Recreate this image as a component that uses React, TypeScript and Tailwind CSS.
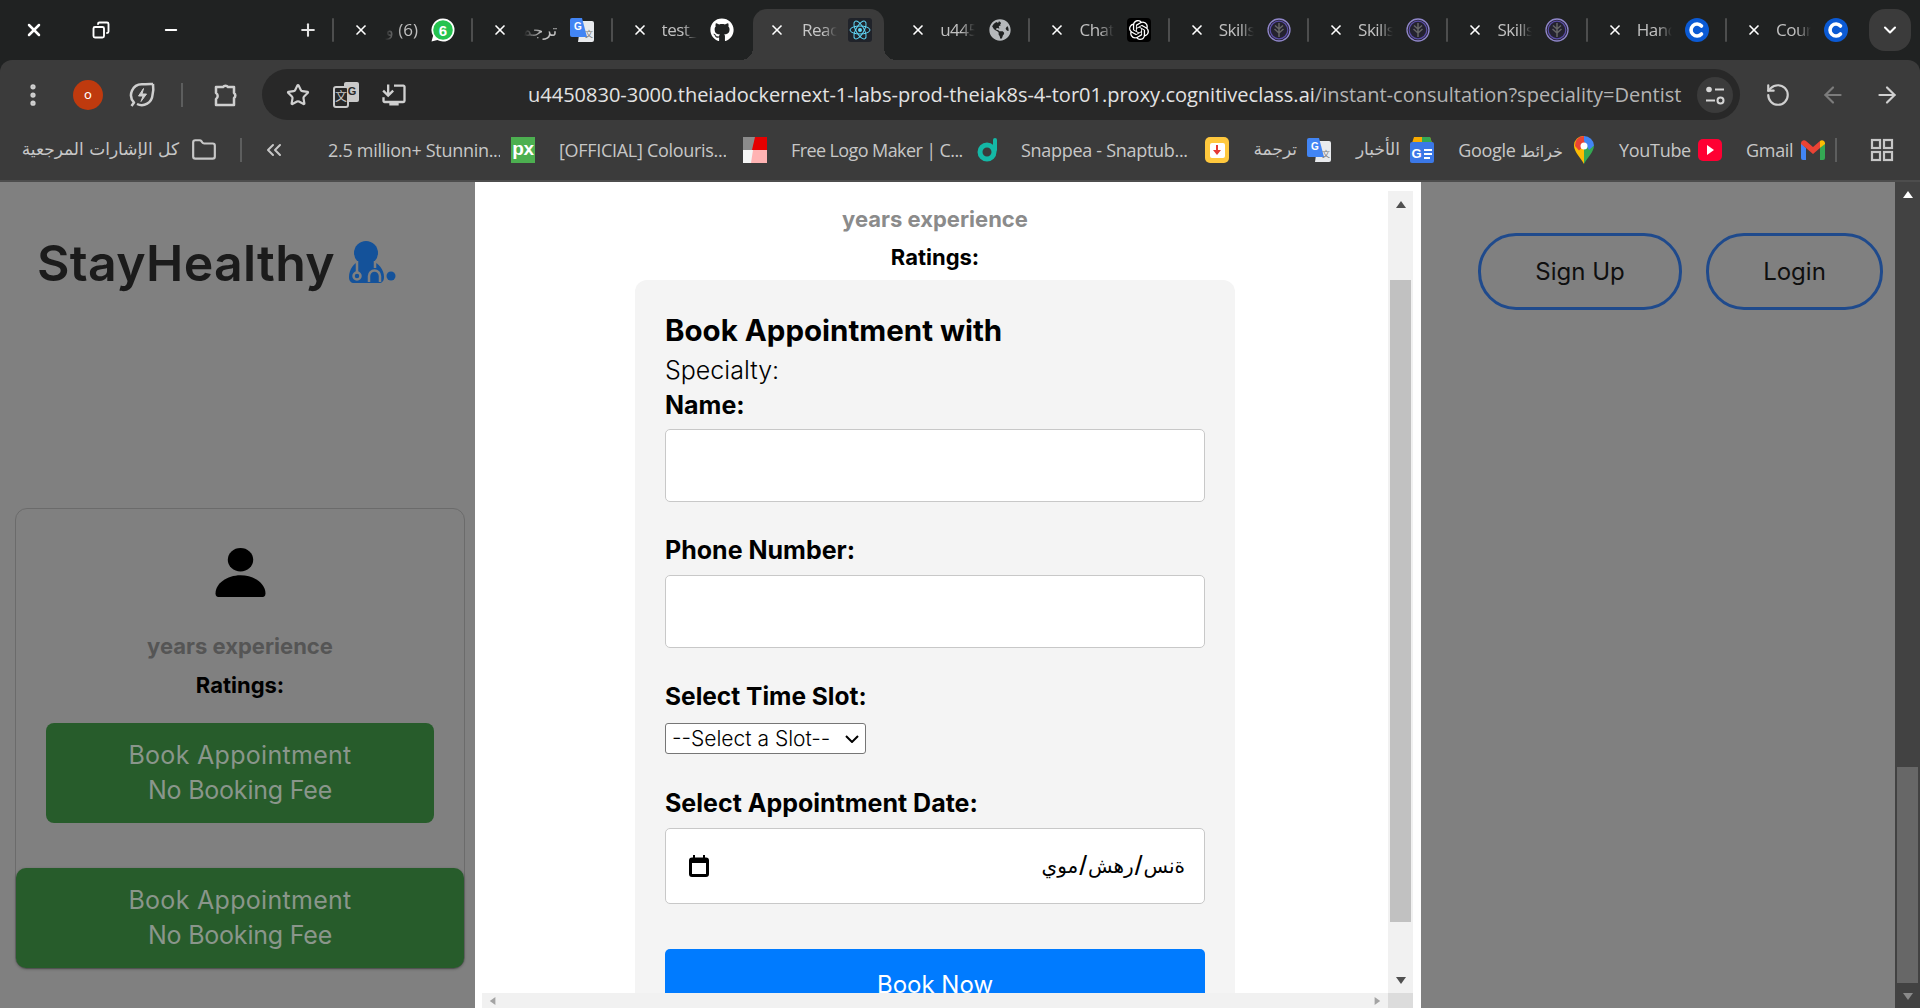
import { ArrowLeft, ArrowRight, ChevronDown, ChevronsLeft, Copy, EllipsisVertical, Folder, Minus, Plus, RotateCcw, Star, X } from "lucide-react";
import { FaGithub, FaGlobeAmericas } from "react-icons/fa";
import { MdInstallDesktop } from "react-icons/md";
import { SiOpenai } from "react-icons/si";
import type { ReactNode } from "react";

function Translate() {
  return (
    <svg viewBox="0 0 24 24" className="w-6 h-6">
      <path d="M11 3h11a2 2 0 0 1 2 2v17a2 2 0 0 1-2 2H8z" fill="#e8eaed" />
      <path d="M2 0h10l5 19H2a2 2 0 0 1-2-2V2a2 2 0 0 1 2-2z" fill="#4285f4" />
      <text x="4" y="12" fontSize="10" fontWeight="700" fill="#fff" fontFamily="Liberation Sans, sans-serif">G</text>
      <text x="15" y="19" fontSize="8" fill="#777" fontFamily="Noto Sans CJK SC, sans-serif">文</text>
    </svg>
  );
}

function Whatsapp() {
  return (
    <svg viewBox="0 0 24 24" className="w-6 h-6">
      <path d="M12 0.5a11.5 11.5 0 0 1 0 23c-2 0-4-.5-5.600-1.400L.5 23.500l1.600-5.700A11.500 11.500 0 0 1 12 .5z" fill="#fff" />
      <circle cx="12" cy="12" r="9.800" fill="#25c34f" />
      <text x="12" y="17.500" textAnchor="middle" fontSize="15" fontWeight="700" fill="#fff" fontFamily="Liberation Sans, sans-serif">6</text>
    </svg>
  );
}

function ReactLogo() {
  return (
    <span className="w-6 h-6 rounded-[3px] bg-[#20232a] flex items-center justify-center">
      <svg viewBox="-12 -12 24 24" className="w-6 h-6" fill="none" stroke="#61dafb" strokeWidth="1">
        <circle r="2" fill="#61dafb" stroke="none" />
        <ellipse rx="10" ry="4" />
        <ellipse rx="10" ry="4" transform="rotate(60)" />
        <ellipse rx="10" ry="4" transform="rotate(120)" />
      </svg>
    </span>
  );
}

function Skills() {
  return (
    <svg viewBox="0 0 24 24" className="w-6 h-6">
      <circle cx="12" cy="12" r="11" fill="#24222f" stroke="#8f86c9" strokeWidth="1.300" />
      <circle cx="12" cy="12" r="8.800" fill="none" stroke="#5b4ea8" strokeWidth="1.200" />
      <path d="M12 5v14M12 11 8 7.500M12 11l4-3.500M12 15l-4.500-4M12 15l4.500-4" stroke="#666" strokeWidth="1.500" fill="none" />
    </svg>
  );
}

function Cognitive() {
  return (
    <span className="w-6 h-6 rounded-full bg-[#0b5ad4] flex items-center justify-center">
      <svg viewBox="0 0 24 24" className="w-6 h-6" fill="none" stroke="#fff" strokeWidth="3.600" strokeLinecap="round">
        <path d="M16.500 8a6 6 0 1 0 0 8" />
      </svg>
    </span>
  );
}

function ChatIcon() {
  return (
    <span className="w-6 h-6 rounded-[4px] bg-black flex items-center justify-center">
      <SiOpenai className="w-5 h-5 text-white" />
    </span>
  );
}

type TabInfo = { title: string; icon: ReactNode; active?: boolean; hideSep?: boolean; rtl?: boolean };

const tabs: TabInfo[] = [
  { title: "(6) و", icon: <Whatsapp />, rtl: true },
  { title: "ترجمة", icon: <Translate />, rtl: true },
  { title: "test_", icon: <FaGithub className="w-6 h-6 text-white" /> },
  { title: "React", icon: <ReactLogo />, active: true, hideSep: true },
  { title: "u4450", icon: <FaGlobeAmericas className="w-[22px] h-[22px] text-[#b5b8bb]" />, hideSep: true },
  { title: "ChatGPT", icon: <ChatIcon /> },
  { title: "Skills", icon: <Skills /> },
  { title: "Skills", icon: <Skills /> },
  { title: "Skills", icon: <Skills /> },
  { title: "Hands", icon: <Cognitive /> },
  { title: "Course", icon: <Cognitive /> },
];

function Tab({ tab }: { tab: TabInfo }) {
  if (tab.active) {
    return (
      <div className="relative ml-[3px] mr-[5px] w-[131.300px] h-[51px] self-end flex items-center bg-[#3b3b3b] rounded-t-[14px] pb-[9px]">
        <span className="absolute -left-3 bottom-0 w-3 h-3 bg-[radial-gradient(circle_at_0_0,transparent_12px,#3b3b3b_12px)]" />
        <span className="absolute -right-3 bottom-0 w-3 h-3 bg-[radial-gradient(circle_at_100%_0,transparent_12px,#3b3b3b_12px)]" />
        <X className="ml-[16px] w-4 h-4 text-white shrink-0" strokeWidth={2.5} />
        <span className="ml-[17px] w-[35px] overflow-hidden whitespace-nowrap text-[17px] tracking-[-0.5px] text-[#c7c7c7] [mask-image:linear-gradient(to_right,black_60%,transparent)]">{tab.title}</span>
        <span className="ml-[11px] shrink-0">{tab.icon}</span>
      </div>
    );
  }
  return (
    <div className="w-[139.300px] h-full flex items-center shrink-0">
      <span className={tab.hideSep ? "w-[2px] h-6" : "w-[2px] h-6 rounded-full bg-[#4d4e4e]"} />
      <X className="ml-[19px] w-4 h-4 text-white shrink-0" strokeWidth={2.5} />
      {tab.rtl ? (
        <span dir="rtl" className="ml-[14px] w-[38px] overflow-hidden whitespace-nowrap text-[17px] text-[#c0c0c0] pr-[3px] [mask-image:linear-gradient(to_right,transparent_5%,black_50%)]">
          {tab.title}
        </span>
      ) : (
        <span className="ml-[14px] w-[38px] overflow-hidden whitespace-nowrap text-[17px] tracking-[-0.5px] text-[#c0c0c0] [mask-image:linear-gradient(to_right,black_55%,transparent_92%)]">
          {tab.title}
        </span>
      )}
      <span className="ml-[10px] w-6 h-6 flex items-center justify-center shrink-0">{tab.icon}</span>
    </div>
  );
}

function TabStrip() {
  return (
    <div className="h-[60px] bg-[#202222] flex items-center shrink-0">
      <div className="w-[332px] h-full flex items-center shrink-0">
        <X className="ml-[24px] w-5 h-5 text-white" strokeWidth={3} />
        <Copy className="ml-[48px] w-[18px] h-[18px] text-white -scale-x-100" strokeWidth={2.5} />
        <Minus className="ml-[52px] w-[18px] h-[18px] text-white" strokeWidth={2.5} />
        <Plus className="ml-[118px] w-5 h-5 text-[#e3e3e3]" strokeWidth={2.5} />
      </div>
      <div className="flex items-center h-full">
        {tabs.map((t, i) => (
          <Tab key={i} tab={t} />
        ))}
      </div>
      <div className="ml-auto mr-[9px] w-[42px] h-[42px] rounded-[16px] bg-[#3b3b3b] flex items-center justify-center">
        <ChevronDown className="w-5 h-5 text-white" strokeWidth={2.5} />
      </div>
    </div>
  );
}

function Toolbar() {
  return (
    <div className="h-[60px] bg-[#3b3b3b] rounded-t-[12px] flex items-start pt-[9px] shrink-0 text-[#d0d0d0]">
      <div className="h-[51px] flex items-center shrink-0">
        <EllipsisVertical className="ml-[15px] w-9 h-7 text-[#cfcfcf]" strokeWidth={2.5} />
        <div className="ml-[22px] w-[30px] h-[30px] rounded-full bg-[#bf3a0e] text-white text-[13px] flex items-center justify-center [font-family:'Noto_Sans',sans-serif]">o</div>
        <svg viewBox="0 0 28 28" className="ml-[25px] w-7 h-7" fill="none" stroke="#cfcfcf" strokeWidth="2.500" strokeLinejoin="round">
          <path d="M25 3c-1 0-7 .3-11 .3A10.800 10.800 0 0 0 6 21.500L3.500 25" />
          <path d="M25 3a30 30 0 0 1-.5 11A10.800 10.800 0 0 1 9 23" />
          <path d="M15.500 7.500 10.500 15h4.500l-2 5.500 5.500-7.500H14z" fill="#cfcfcf" strokeWidth="1" />
        </svg>
        <span className="ml-[25px] w-[2px] h-6 bg-[#5d5e5e]" />
        <svg viewBox="0 0 26 26" className="ml-[30px] w-[26px] h-[26px]" fill="none" stroke="#cfcfcf" strokeWidth="2.500" strokeLinejoin="round">
          <path d="M3 5h7a3 3 0 0 1 5 0h6v6a3 3 0 0 1 0 5v7H3v-6a3.500 3.500 0 0 0 0-6z" />
        </svg>
      </div>
      <div className="ml-[23px] w-[1478px] h-[51px] rounded-[26px] bg-[#282828] flex items-center shrink-0">
        <Star className="ml-[24px] w-6 h-6 shrink-0" strokeWidth={2.2} />
        <svg viewBox="0 0 26 26" className="ml-[23px] w-[26px] h-[26px] shrink-0">
          <rect x="11" y="0" width="15" height="20" rx="2" fill="#c9c9c9" />
          <rect x="1" y="5" width="14" height="20" rx="2" fill="#282828" stroke="#c9c9c9" strokeWidth="2" />
          <text x="8" y="19" textAnchor="middle" fontSize="12" fill="#c9c9c9" fontFamily="Noto Sans CJK SC, sans-serif">文</text>
          <text x="19" y="13" textAnchor="middle" fontSize="11" fontWeight="700" fill="#282828" fontFamily="Liberation Sans, sans-serif">G</text>
        </svg>
        <MdInstallDesktop className="ml-[21px] w-7 h-7 shrink-0 text-[#d0d0d0] -scale-x-100" />
        <div className="ml-[120px] w-[1154px] whitespace-nowrap text-[20px] text-[#e3e3e3] [font-family:'Open_Sans',sans-serif]">
          u4450830-3000.theiadockernext-1-labs-prod-theiak8s-4-tor01.proxy.cognitiveclass.ai<span className="text-[#b4b4b4]">/instant-consultation?speciality=Dentist</span>
        </div>
        <div className="ml-auto mr-[7px] w-9 h-9 rounded-full bg-[#3b3b3b] flex items-center justify-center shrink-0">
          <svg viewBox="0 0 24 24" className="w-6 h-6" fill="none" stroke="#d6d6d6" strokeWidth="2">
            <circle cx="6" cy="6.500" r="2.800" fill="#d6d6d6" stroke="none" />
            <path d="M12 6.500h9M3 17.500h9" />
            <circle cx="17.500" cy="17.500" r="3" />
          </svg>
        </div>
      </div>
      <div className="h-[51px] flex items-center shrink-0">
        <RotateCcw className="ml-[25px] w-[26px] h-[26px] text-[#d0d0d0]" strokeWidth={2} />
        <ArrowLeft className="ml-[29px] w-[26px] h-[26px] text-[#7c7c7c]" strokeWidth={2} />
        <ArrowRight className="ml-[28px] w-[26px] h-[26px] text-[#d0d0d0]" strokeWidth={2} />
      </div>
    </div>
  );
}

function Px() {
  return <span className="w-6 h-[26px] bg-[#4caf50] text-white text-[19px] font-bold leading-[24px] text-center [font-family:'Liberation_Sans',sans-serif]">px</span>;
}

function ColourIcon() {
  return (
    <svg viewBox="0 0 24 26" className="w-6 h-[26px]">
      <rect width="24" height="26" fill="#e8e8e8" />
      <path d="M0 0h12v13H0z" fill="#8b8b8b" />
      <path d="M12 0h12v13H9z" fill="#e60000" />
      <path d="M0 13h24v13H0z" fill="#f5f5f5" />
      <path d="M10 13h14v13H8z" fill="#ffb3b3" />
    </svg>
  );
}

function DesignIcon() {
  return (
    <svg viewBox="0 0 24 26" className="w-6 h-[26px]" fill="none">
      <circle cx="11" cy="15" r="7" stroke="#14b8a6" strokeWidth="5" />
      <path d="M19 3v10" stroke="#14b8a6" strokeWidth="4" strokeLinecap="round" />
    </svg>
  );
}

function SnappeaIcon() {
  return (
    <span className="w-6 h-[26px] rounded-[5px] bg-[#ffc83d] flex items-center justify-center">
      <span className="w-[15px] h-[15px] bg-white rounded-[2px] flex items-center justify-center">
        <svg viewBox="0 0 10 10" className="w-[10px] h-[10px]"><path d="M4 0h2v5h3L5 10 1 5h3z" fill="#e53935" /></svg>
      </span>
    </span>
  );
}

function NewsIcon() {
  return (
    <svg viewBox="0 0 24 26" className="w-6 h-[26px]">
      <path d="M4 0h16l2 6H2z" fill="#f9ab00" />
      <path d="M12 0h8l2 6h-10z" fill="#34a853" />
      <rect y="5" width="24" height="21" rx="2" fill="#3b78e7" />
      <text x="6.500" y="21" textAnchor="middle" fontSize="13" fontWeight="700" fill="#fff" fontFamily="Liberation Sans, sans-serif">G</text>
      <path d="M14 12h8v2h-8zM14 16h8v2h-8zM14 20h6v2h-6z" fill="#fff" />
    </svg>
  );
}

function MapsIcon() {
  return (
    <svg viewBox="0 0 20 28" className="w-5 h-7">
      <path d="M10 28C7 22 0 16 0 9.500A9.500 9.500 0 0 1 10 0v28z" fill="#fbbc04" />
      <path d="M10 28c3-6 10-12 10-18.500L10 10z" fill="#34a853" />
      <path d="M3 3a10 10 0 0 1 7-3l5 5-10 9.500L1 10a10 10 0 0 1 2-7z" fill="#ea4335" />
      <path d="M10 0a10 10 0 0 1 10 9.500L15 14l-5-9z" fill="#4285f4" />
      <circle cx="10" cy="10" r="3.500" fill="#fff" />
    </svg>
  );
}

function YoutubeIcon() {
  return (
    <span className="w-6 h-[22px] rounded-[5px] bg-[#ff0033] flex items-center justify-center">
      <svg viewBox="0 0 10 10" className="w-[10px] h-[10px]"><path d="M2 0l7 5-7 5z" fill="#fff" /></svg>
    </span>
  );
}

function GmailIcon() {
  return (
    <svg viewBox="0 0 24 20" className="w-6 h-5">
      <path d="M0 3v15a2 2 0 0 0 2 2h3V8z" fill="#4285f4" />
      <path d="M24 3v15a2 2 0 0 1-2 2h-3V8z" fill="#34a853" />
      <path d="M19 1v7l5-4V3a3 3 0 0 0-5-2z" fill="#fbbc04" />
      <path d="M0 3a3 3 0 0 1 5-2l7 6 7-6v7l-7 6-7-6V8L0 4z" fill="#ea4335" />
    </svg>
  );
}

function BookmarkBar() {
  return (
    <div className="h-[62px] bg-[#3b3b3b] border-b-2 border-[#4d4d4d] flex items-center text-[#c7c7c7] text-[18px] whitespace-nowrap shrink-0 [font-family:'Open_Sans','DejaVu_Sans',sans-serif] tracking-[-0.3px]">
      <span className="ml-[18px] w-[161px] text-right [font-family:'DejaVu_Sans',sans-serif] text-[17px]" dir="rtl">كل الإشارات المرجعية</span>
      <Folder className="ml-[12px] w-[26px] h-[26px] shrink-0" strokeWidth={2} />
      <span className="ml-[23px] w-[2px] h-6 bg-[#5d5e5e] shrink-0" />
      <ChevronsLeft className="ml-[20px] w-6 h-6 shrink-0" strokeWidth={2} />
      <span className="ml-[42px] w-[172px] overflow-hidden">2.5 million+ Stunnin...</span>
      <span className="ml-[11px] shrink-0 flex"><Px /></span>
      <span className="ml-[24px] w-[167px] overflow-hidden">[OFFICIAL] Colouris...</span>
      <span className="ml-[17px] shrink-0 flex"><ColourIcon /></span>
      <span className="ml-[24px] w-[174px] overflow-hidden tracking-[-0.6px]">Free Logo Maker | C...</span>
      <span className="ml-[11px] shrink-0 flex"><DesignIcon /></span>
      <span className="ml-[21px] w-[166px] overflow-hidden">Snappea - Snaptub...</span>
      <span className="ml-[18px] shrink-0 flex"><SnappeaIcon /></span>
      <span className="ml-[21px] w-[47px] text-right [font-family:'DejaVu_Sans',sans-serif] text-[17px]" dir="rtl">ترجمة</span>
      <span className="ml-[10px] shrink-0 flex"><Translate /></span>
      <span className="ml-[20px] w-[49px] text-right [font-family:'DejaVu_Sans',sans-serif] text-[17px]" dir="rtl">الأخبار</span>
      <span className="ml-[10px] shrink-0 flex"><NewsIcon /></span>
      <span className="ml-[18px] w-[111px] text-right" dir="rtl"><span className="[font-family:'DejaVu_Sans',sans-serif] text-[16px]">خرائط</span> Google</span>
      <span className="ml-[11px] shrink-0 flex"><MapsIcon /></span>
      <span className="ml-[25px] w-[72px]">YouTube</span>
      <span className="ml-[7px] shrink-0 flex"><YoutubeIcon /></span>
      <span className="ml-[24px] w-[45px]">Gmail</span>
      <span className="ml-[10px] shrink-0 flex"><GmailIcon /></span>
      <span className="ml-[10px] w-[2px] h-6 bg-[#5d5e5e] shrink-0" />
      <svg viewBox="0 0 24 24" className="ml-[33px] w-6 h-6 shrink-0" fill="none" stroke="#c7c7c7" strokeWidth="2.200">
        <rect x="2" y="2" width="8" height="8" />
        <rect x="14" y="2" width="8" height="8" />
        <rect x="2" y="14" width="8" height="8" />
        <rect x="14" y="14" width="8" height="8" />
      </svg>
    </div>
  );
}

function DoctorLogo() {
  return (
    <svg viewBox="0 0 50 42" className="ml-3 w-[50px] h-[42px] shrink-0">
      <circle cx="19" cy="12" r="12" fill="#14529a" />
      <path d="M2 36c0-8 5-14 11-16h12c6 2 12 8 12 16 0 4-2 6-5 6H7c-3 0-5-2-5-6z" fill="#14529a" />
      <g fill="none" stroke="#808080" strokeWidth="2.500">
        <path d="M10 20v11M28 20v7" />
        <circle cx="10" cy="35" r="3.500" />
        <path d="M22 41v-6a5.500 5.500 0 0 1 11 0v6" />
      </g>
      <circle cx="44" cy="35" r="4.500" fill="#14529a" />
    </svg>
  );
}

function PersonIcon() {
  return (
    <svg viewBox="0 0 53 52" className="w-[53px] h-[52px]">
      <ellipse cx="26.500" cy="12.500" rx="13.500" ry="12.500" fill="#000" />
      <path d="M0 48C0 38 12 29 26.500 29S53 38 53 48q0 4-3 4H3q-3 0-3-4z" fill="#000" />
    </svg>
  );
}

function DimButton({ wide }: { wide?: boolean }) {
  return (
    <div className={wide ? "w-[448px] h-[100px] rounded-[10px] shadow-[0_1px_3px_rgba(0,0,0,0.35)] bg-[#275c2b] text-[#8a968b] text-[25px] leading-[35px] text-center pt-[15px] tracking-[0.3px]" : "w-[388px] h-[100px] rounded-[8px] bg-[#275c2b] text-[#8a968b] text-[25px] leading-[35px] text-center pt-[15px] tracking-[0.3px]"}>
      Book Appointment
      <br />
      <span className="tracking-[-0.2px]">No Booking Fee</span>
    </div>
  );
}

function LeftPane() {
  return (
    <div className="w-[475px] shrink-0 flex flex-col">
      <div className="pl-[37px] pt-[51px] h-[326px] flex items-start">
        <span className="text-[50px] leading-[60px] font-semibold text-[#1b1b1b] tracking-[0.3px]">StayHealthy</span>
        <span className="mt-[8px]"><DoctorLogo /></span>
      </div>
      <div className="ml-[15px] w-[450px] h-[461px] border border-[#6b6b6b] rounded-[12px] flex flex-col items-center pt-[39px]">
        <PersonIcon />
        <div className="mt-[34px] text-[22px] leading-[30px] font-bold text-[#555]">years experience</div>
        <div className="mt-[9px] text-[22px] leading-[30px] font-bold text-black">Ratings:</div>
        <div className="mt-[23px]"><DimButton /></div>
        <div className="mt-[45px]"><DimButton wide /></div>
      </div>
    </div>
  );
}

function Triangle({ up, left, right, fillClass }: { up?: boolean; left?: boolean; right?: boolean; fillClass: string }) {
  const d = up ? "M5 1l5 7H0z" : left ? "M1 5l7-5v10z" : right ? "M9 5L2 0v10z" : "M5 9L0 2h10z";
  return (
    <svg viewBox="0 0 10 10" className={fillClass}>
      <path d={d} />
    </svg>
  );
}

function FieldInput() {
  return <input className="block w-[540px] h-[73px] bg-white border border-[#c8c8c8] rounded-[5px]" />;
}

function BookingModal() {
  return (
    <div className="w-[946px] shrink-0 bg-white pt-[9px] pl-[7px] pr-[8px] flex flex-col">
      <div className="flex-1 flex min-h-0">
        <div className="flex-1 overflow-hidden flex flex-col items-center pt-[13px]">
          <div className="text-[22px] leading-[30px] font-bold text-[#8b8b8b]">years experience</div>
          <div className="mt-[8px] text-[22px] leading-[30px] font-bold text-black">Ratings:</div>
          <div className="mt-[8px] w-[600px] bg-[#f4f4f4] rounded-[12px] px-[30px] pt-[30px] shrink-0">
            <h2 className="text-[29.500px] leading-[40px] font-bold text-black">Book Appointment with</h2>
            <p className="mt-[2px] text-[25px] leading-[36px] font-light text-black">Specialty:</p>
            <label className="block -mt-[1px] text-[25px] leading-[36px] font-bold text-black">Name:</label>
            <div className="mt-[6px]"><FieldInput /></div>
            <label className="block mt-[30px] text-[25px] leading-[36px] font-bold text-black">Phone Number:</label>
            <div className="mt-[7px]"><FieldInput /></div>
            <label className="block mt-[30px] text-[24.500px] leading-[36px] font-bold text-black">Select Time Slot:</label>
            <div className="relative mt-[9px] w-[201px] h-[31px]">
              <select defaultValue="" className="block w-full h-full appearance-none bg-white border border-[#767676] rounded-[3px] text-[21px] leading-[28px] pl-[6px] text-black font-light">
                <option value="">--Select a Slot--</option>
              </select>
              <svg viewBox="0 0 14 8" className="absolute right-[7px] top-[12px] w-[14px] h-2 pointer-events-none" fill="none" stroke="#000" strokeWidth="2">
                <path d="M1 1l6 6 6-6" />
              </svg>
            </div>
            <label className="block mt-[31px] text-[25px] leading-[36px] font-bold text-black">Select Appointment Date:</label>
            <div className="mt-[7px] w-[540px] h-[76px] bg-white border border-[#c8c8c8] rounded-[5px] flex items-center pl-[23px] pr-[19px]">
              <svg viewBox="0 0 20 22" className="w-5 h-[22px] shrink-0" fill="none">
                <rect x="1.500" y="4" width="17" height="16.500" rx="1.500" stroke="#000" strokeWidth="3" />
                <rect x="1" y="3" width="18" height="5" fill="#000" />
                <path d="M5 0v4M15 0v4" stroke="#000" strokeWidth="2" />
              </svg>
              <span className="ml-auto text-[20px] text-black [font-family:'DejaVu_Sans',sans-serif] flex items-center gap-[1px]" dir="rtl">
                <span>ةنس</span>
                <span className="text-[28px] leading-[28px] font-light [font-family:'Liberation_Sans',sans-serif]">/</span>
                <span>رهش</span>
                <span className="text-[28px] leading-[28px] font-light [font-family:'Liberation_Sans',sans-serif]">/</span>
                <span>موي</span>
              </span>
            </div>
            <div className="mt-[45px] w-[540px] h-[72px] rounded-[5px] bg-[#007bff] text-white text-[24px] flex items-center justify-center">Book Now</div>
          </div>
        </div>
        <div className="w-[25px] bg-[#f1f1f1] shrink-0 flex flex-col items-center">
          <span className="mt-[9px] h-[10px] flex"><Triangle up fillClass="w-[10px] h-[10px] fill-[#505050]" /></span>
          <span className="mt-[70px] w-[21px] h-[642px] bg-[#c1c1c1]" />
          <span className="mt-[53px] h-[10px] flex"><Triangle fillClass="w-[10px] h-[10px] fill-[#505050]" /></span>
        </div>
      </div>
      <div className="h-[15px] flex shrink-0">
        <div className="flex-1 bg-[#f1f1f1] flex items-center justify-between px-[7px]">
          <Triangle left fillClass="w-2 h-[10px] fill-[#a3a3a3]" />
          <Triangle right fillClass="w-2 h-[10px] fill-[#a3a3a3]" />
        </div>
        <div className="w-[25px] bg-[#dcdcdc]" />
      </div>
    </div>
  );
}

function RightPane() {
  return (
    <div className="flex-1 flex justify-end items-start gap-6 pt-[51px] pr-[12px]">
      <button className="w-[204px] h-[77px] rounded-[38px] border-[3px] border-[#1f4a8c] text-[24px] text-[#0f0f0f]">Sign Up</button>
      <button className="w-[177px] h-[77px] rounded-[38px] border-[3px] border-[#1f4a8c] text-[24px] text-[#0f0f0f]">Login</button>
    </div>
  );
}

function PageScrollbar() {
  return (
    <div className="w-[25px] bg-[#424242] shrink-0 flex flex-col items-center">
      <span className="mt-[8px] h-[10px] flex"><Triangle up fillClass="w-[12px] h-[10px] fill-white" /></span>
      <span className="mt-[567px] w-[21px] h-[216px] bg-[#676767]" />
      <span className="mt-[8px] h-[10px] flex"><Triangle fillClass="w-[12px] h-[10px] fill-[#8a8a8a]" /></span>
    </div>
  );
}

export default function App() {
  return (
    <div className="w-[1920px] h-[1008px] overflow-hidden flex flex-col bg-[#202222] [font-family:Inter,sans-serif]">
      <div className="[font-family:'Open_Sans','DejaVu_Sans',sans-serif]">
        <TabStrip />
        <Toolbar />
        <BookmarkBar />
      </div>
      <div className="flex-1 min-h-0 flex bg-[#808080]">
        <LeftPane />
        <BookingModal />
        <RightPane />
        <PageScrollbar />
      </div>
    </div>
  );
}
